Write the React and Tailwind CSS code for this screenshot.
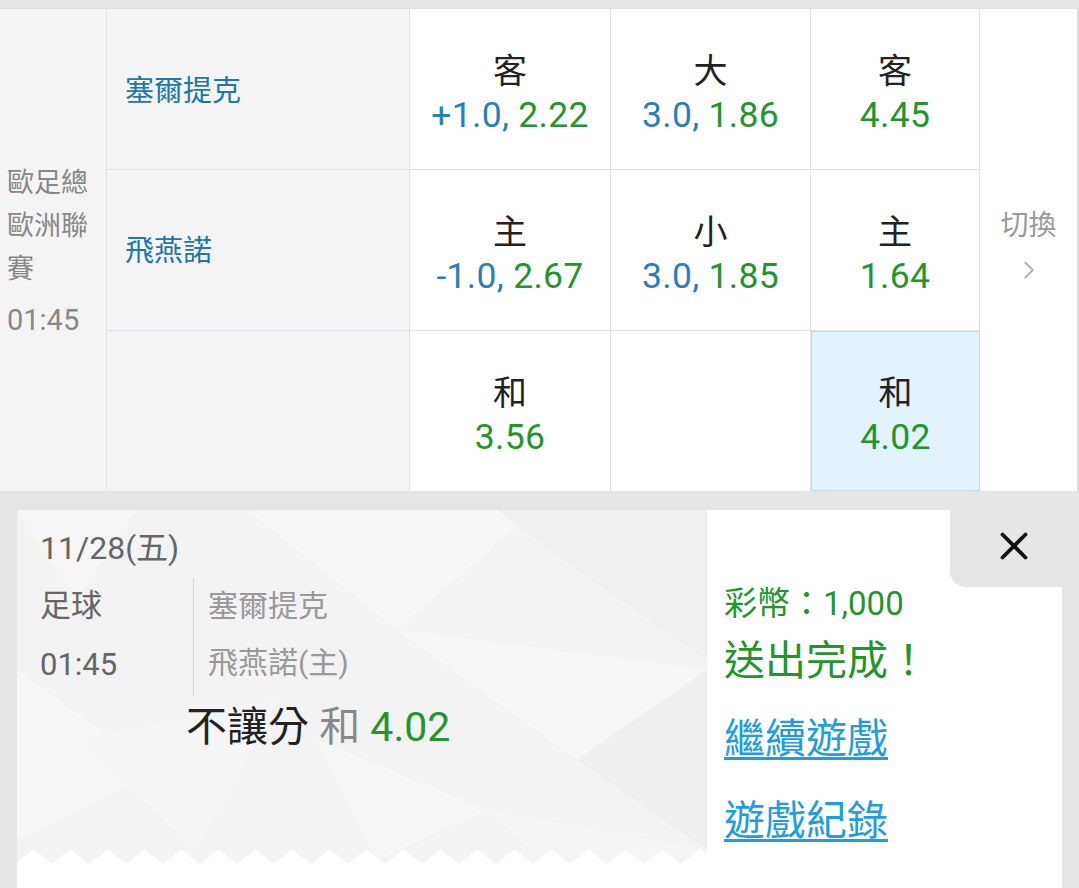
import React from "react";
import { ChevronRight, X } from "lucide-react";

const FONT = { fontFamily: "Roboto, 'Noto Sans CJK TC', 'Noto Sans', sans-serif" };

function Cell({ label, a, b, highlight, className = "" }) {
  return (
    <div
      className={`flex flex-col items-center justify-center pt-[7px] border-r border-b border-[#dde3e7] ${
        highlight ? "bg-[#e1f3fc] border-l border-t !border-[#bcdcea]" : "bg-white"
      } ${className}`}
    >
      {label && (
        <>
          <div className="text-[34px] leading-[44px] text-[#222]">{label}</div>
          <div className="text-[35.5px] leading-[44px] whitespace-nowrap tracking-[0.3px]">
            {a && <span className="text-[#2b7fb8]">{a}, </span>}
            <span className="text-[#22962a]">{b}</span>
          </div>
        </>
      )}
    </div>
  );
}

function TicketPattern() {
  return (
    <svg className="absolute inset-0 w-full h-full" viewBox="0 0 690 378" preserveAspectRatio="none">
      <rect x="0" y="0" width="690" height="378" fill="#f3f3f3" />
      <polygon points="0,0 120,0 60,90" fill="#f6f6f6" />
      <polygon points="230,0 520,0 380,120" fill="#f6f6f6" />
      <polygon points="480,0 690,0 690,150 560,60" fill="#f0f0f0" />
      <polygon points="0,160 140,260 0,330" fill="#f6f6f6" />
      <polygon points="380,120 690,160 560,250" fill="#f6f6f6" />
      <polygon points="560,250 690,160 690,340" fill="#efefef" />
      <polygon points="60,230 260,190 180,340" fill="#f5f5f5" />
      <polygon points="300,230 470,300 360,350" fill="#f6f6f6" />
      <polygon points="470,300 690,340 560,380" fill="#f5f5f5" />
    </svg>
  );
}

function Zigzag() {
  const period = 37;
  return (
    <svg className="absolute left-0 bottom-0 w-[690px] h-[42px]" viewBox="0 0 690 42" preserveAspectRatio="none">
      <polygon
        points={
          "0,42 " +
          Array.from({ length: 20 }, (_, i) => {
            const x0 = i * period - 2;
            return `${x0},18 ${x0 + period / 2},3`;
          }).join(" ") +
          " 740,18 740,42"
        }
        fill="#ffffff"
      />
    </svg>
  );
}

export default function App() {
  return (
    <div className="w-[1079px] h-[888px] overflow-hidden bg-[#e6e6e6]" style={FONT}>
      <div className="h-[9px] bg-[#e8e8e8] border-b border-[#e0e0e0]" />
      {/* Odds table */}
      <div className="grid grid-cols-[107px_303px_201px_200px_169px_1fr] grid-rows-[161px_161px_160px] border-r-2 border-[#dcdcdc]">
        <div className="row-span-3 bg-[#f4f4f4] border-r border-[#e2e2e2] flex flex-col justify-center pl-[7px] pt-[8px] text-[#888]">
          <div className="text-[27px] leading-[43px]">歐足總</div>
          <div className="text-[27px] leading-[43px]">歐洲聯</div>
          <div className="text-[27px] leading-[43px]">賽</div>
          <div className="text-[29px] leading-[52px] mt-[3px]">01:45</div>
        </div>
        <div className="bg-[#f4f4f4] border-r border-b border-[#dde3e7] flex items-center pl-[18px] pt-[6px] text-[29px] text-[#2176aa]">
          塞爾提克
        </div>
        <Cell label="客" a="+1.0" b="2.22" />
        <Cell label="大" a="3.0" b="1.86" />
        <Cell label="客" b="4.45" />
        <div className="row-span-3 bg-white flex flex-col items-center justify-center text-[#9a9a9a]">
          <div className="text-[28px] leading-[40px] -mt-[10px]">切換</div>
          <ChevronRight className="w-[30px] h-[30px] mt-[9px] text-[#b0b0b0]" strokeWidth={1.5} />
        </div>
        <div className="bg-[#f4f4f4] border-r border-b border-[#dde3e7] flex items-center pl-[18px] pt-[4px] text-[29px] text-[#2176aa]">
          飛燕諾
        </div>
        <Cell label="主" a="-1.0" b="2.67" />
        <Cell label="小" a="3.0" b="1.85" />
        <Cell label="主" b="1.64" />
        <div className="bg-[#f4f4f4] border-r border-[#dde3e7]" />
        <Cell label="和" b="3.56" className="border-b-0" />
        <div className="bg-white border-r border-[#e6e6e6]" />
        <Cell label="和" b="4.02" highlight />
      </div>

      {/* Result panel */}
      <div className="mt-[19px] ml-[17px] w-[1045px] h-[378px] bg-white flex">
        <div className="relative w-[690px] h-full overflow-hidden">
          <TicketPattern />
          <Zigzag />
          <div className="relative pl-[23px] pt-[18px]">
            <div className="text-[32px] leading-[40px] text-[#666]">11/28(五)</div>
            <div className="flex mt-[10px]">
              <div className="w-[153px] text-[31px] text-[#666]">
                <div className="leading-[56px]">足球</div>
                <div className="leading-[62px]">01:45</div>
              </div>
              <div className="border-l border-[#d6d6d6] pl-[14px] text-[30px] text-[#999]">
                <div className="leading-[56px]">塞爾提克</div>
                <div className="leading-[58px]">飛燕諾(主)</div>
              </div>
            </div>
            <div className="pl-[146px] mt-[5px] text-[41px] leading-[52px] whitespace-nowrap">
              <span className="text-[#222]">不讓分 </span>
              <span className="text-[#888]">和 </span>
              <span className="text-[#22962a]">4.02</span>
            </div>
          </div>
        </div>
        <div className="flex-1 flex flex-col">
          <div className="flex justify-end">
            <div className="w-[112px] h-[77px] bg-[#e6e6e6] rounded-bl-[16px] flex items-center justify-center">
              <X className="w-[46px] h-[46px] text-[#111] -mt-[6px] ml-[16px]" strokeWidth={2} />
            </div>
          </div>
          <div className="pl-[17px] -mt-[9px] text-[#22962a]">
            <div className="text-[33px] leading-[52px]">彩幣：1,000</div>
            <div className="text-[41px] leading-[58px] mt-[2px]">送出完成！</div>
            <a className="block w-fit text-[41px] leading-[50px] mt-[24px] text-[#1f9de2] underline decoration-[3px] underline-offset-[4px]">
              繼續遊戲
            </a>
            <a className="block w-fit text-[41px] leading-[50px] mt-[32px] text-[#1f9de2] underline decoration-[3px] underline-offset-[4px]">
              遊戲紀錄
            </a>
          </div>
        </div>
      </div>
    </div>
  );
}
